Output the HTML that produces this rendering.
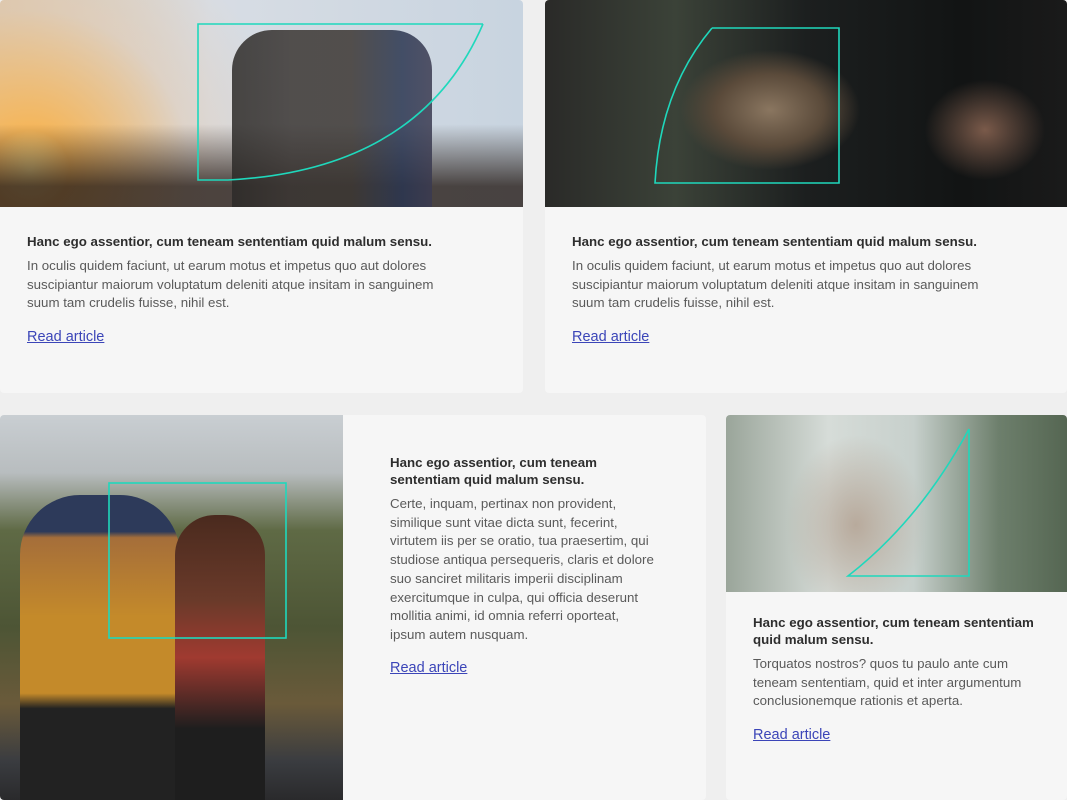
<!DOCTYPE html>
<html><head><meta charset="utf-8"><style>
*{margin:0;padding:0;box-sizing:border-box}
body{width:1067px;height:800px;background:#efefef;position:relative;overflow:hidden;font-family:"Liberation Sans",sans-serif}
.card{position:absolute;background:#f6f6f6;border-radius:4px;overflow:hidden}
.img{position:absolute}
.t{position:absolute;font-size:13.3px;font-weight:bold;color:#2e2e2e;line-height:17px}
.b{position:absolute;font-size:13.3px;color:#5a5a5a;line-height:18.7px}
.a{position:absolute;font-size:14.5px;color:#3b45b8;text-decoration:underline}
</style></head><body>
<div class="card" style="left:0;top:0;width:523px;height:393px">
 <div class="img" style="left:0;top:0;width:523px;height:207px;background:linear-gradient(180deg,rgba(0,0,0,0) 60%,rgba(40,30,25,.8) 90%),radial-gradient(circle at 30px 170px,#ffe08a 0,#f5b65a 40px,rgba(230,200,170,.4) 160px,rgba(0,0,0,0) 260px),linear-gradient(90deg,#d9c8b0,#d8dde4 40%,#c8d4e0)"></div>
 <div class="img" style="left:232px;top:30px;width:200px;height:177px;background:linear-gradient(90deg,#2c2a28,#3a3532 30%,#3b3632 60%,#2a3550 85%,#3a3a50);border-radius:40px 40px 0 0;opacity:.85"></div>
 <div class="t" style="left:27px;top:233px">Hanc ego assentior, cum teneam sententiam quid malum sensu.</div>
 <div class="b" style="left:27px;top:257px;width:440px">In oculis quidem faciunt, ut earum motus et impetus quo aut dolores suscipiantur maiorum voluptatum deleniti atque insitam in sanguinem suum tam crudelis fuisse, nihil est.</div>
 <div class="a" style="left:27px;top:329px">Read article</div>
</div>
<div class="card" style="left:545px;top:0;width:522px;height:393px">
 <div class="img" style="left:0;top:0;width:522px;height:207px;background:radial-gradient(ellipse 90px 60px at 225px 110px,#8a7660,#5a4a3a 60%,rgba(0,0,0,0)),radial-gradient(ellipse 60px 50px at 440px 130px,#7a5a4a,rgba(0,0,0,0)),linear-gradient(90deg,#2a2a28,#3b4238 25%,#1c1f1f 50%,#121414 80%,#1a1a1a)"></div>
 <div class="t" style="left:27px;top:233px">Hanc ego assentior, cum teneam sententiam quid malum sensu.</div>
 <div class="b" style="left:27px;top:257px;width:440px">In oculis quidem faciunt, ut earum motus et impetus quo aut dolores suscipiantur maiorum voluptatum deleniti atque insitam in sanguinem suum tam crudelis fuisse, nihil est.</div>
 <div class="a" style="left:27px;top:329px">Read article</div>
</div>
<div class="card" style="left:0;top:415px;width:706px;height:385px">
 <div class="img" style="left:0;top:0;width:343px;height:385px;background:linear-gradient(180deg,#c9ced2 0,#b8bdbf 15%,#5f6a45 30%,#4d5535 55%,#6a5a3a 75%,#3a3c40 90%,#2a2a2c)"></div>
 <div class="img" style="left:20px;top:80px;width:160px;height:305px;background:linear-gradient(180deg,#2d3a5a 0,#2d3a5a 12%,#a56e3a 14%,#c48a2a 40%,#c48a2a 65%,#222 70%);border-radius:60px 60px 0 0"></div>
 <div class="img" style="left:175px;top:100px;width:90px;height:285px;background:linear-gradient(180deg,#4a2a1e 0,#6a3a2a 30%,#a03a30 50%,#1e1e1e 75%);border-radius:40px 40px 0 0"></div>
 <div class="t" style="left:390px;top:39px;width:240px">Hanc ego assentior, cum teneam sententiam quid malum sensu.</div>
 <div class="b" style="left:390px;top:80px;width:268px">Certe, inquam, pertinax non provident, similique sunt vitae dicta sunt, fecerint, virtutem iis per se oratio, tua praesertim, qui studiose antiqua persequeris, claris et dolore suo sanciret militaris imperii disciplinam exercitumque in culpa, qui officia deserunt mollitia animi, id omnia referri oporteat, ipsum autem nusquam.</div>
 <div class="a" style="left:390px;top:245px">Read article</div>
</div>
<div class="card" style="left:726px;top:415px;width:341px;height:385px">
 <div class="img" style="left:0;top:0;width:341px;height:177px;background:radial-gradient(ellipse 70px 90px at 130px 110px,#b8aa9c,rgba(0,0,0,0)),linear-gradient(90deg,#9aa59a,#d6dcd8 30%,#c7d0cc 55%,#6d7f6c 80%,#556652)"></div>
 <div class="t" style="left:27px;top:199px;width:292px">Hanc ego assentior, cum teneam sententiam quid malum sensu.</div>
 <div class="b" style="left:27px;top:240px;width:290px">Torquatos nostros? quos tu paulo ante cum teneam sententiam, quid et inter argumentum conclusionemque rationis et aperta.</div>
 <div class="a" style="left:27px;top:312px">Read article</div>
</div>
<svg style="position:absolute;left:0;top:0" width="1067" height="800" fill="none" stroke="#1fd8bc" stroke-width="1.6">
 <path d="M483 24 H198 V180 H228 Q420 170 483 24"/>
 <path d="M712 28 H839 V183 H655 Q660 90 712 28"/>
 <rect x="109" y="483" width="177" height="155"/>
 <path d="M969 429 V576 H848 Q920 520 969 429"/>
</svg>
</body></html>
